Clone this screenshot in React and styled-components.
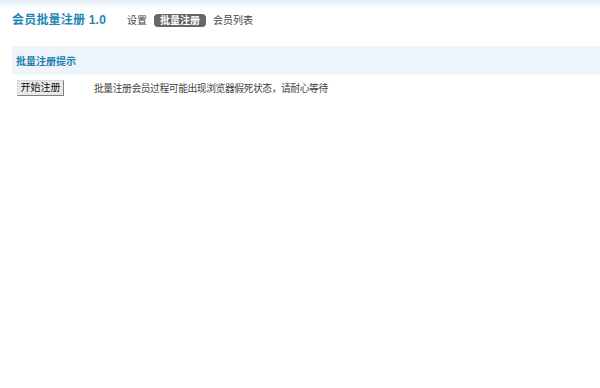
import React from "react";
import styled, { createGlobalStyle } from "styled-components";

const GlobalStyle = createGlobalStyle`
  html, body {
    margin: 0;
    padding: 0;
    background: #fff;
  }
  body {
    font-family: "Liberation Sans", "Noto Sans CJK SC", sans-serif;
    color: #333;
  }
`;

const Page = styled.div`
  width: 600px;
  min-height: 388px;
  background: linear-gradient(to bottom, #e6eff8 0px, #ffffff 9px);
`;

const Header = styled.div`
  display: flex;
  align-items: center;
  height: 40px;
  padding: 0 0 0 12px;
  margin-bottom: 6px;
`;

const Title = styled.h1`
  margin: 0 21px 0 0;
  font-size: 12px;
  font-weight: bold;
  color: #1b87b3;
  letter-spacing: 0.2px;
  line-height: 14px;
`;

const Nav = styled.div`
  display: flex;
  align-items: center;
  gap: 7px;
`;

const NavItem = styled.span`
  font-size: 10px;
  line-height: 13px;
  height: 13px;
  padding: 0 ${(p) => (p.$active ? "6px" : "0")};
  border-radius: 4px;
  font-weight: ${(p) => (p.$active ? "bold" : "normal")};
  background: ${(p) => (p.$active ? "#666" : "transparent")};
  color: ${(p) => (p.$active ? "#fff" : "#444")};
`;

const Content = styled.div`
  padding-left: 12px;
`;

const TipBar = styled.div`
  height: 28px;
  display: flex;
  align-items: center;
  padding-left: 4px;
  background: #edf4fb;
  border-bottom: 1px dotted #f4f7fb;
  font-size: 10px;
  font-weight: bold;
  color: #1a7fae;
`;

const ActionRow = styled.div`
  display: flex;
  align-items: center;
  padding: 5px 0 0 5px;
`;

const Button = styled.button`
  width: 47px;
  height: 16px;
  padding: 0;
  margin: 0 30px 0 0;
  font-family: inherit;
  font-size: 10px;
  line-height: 14px;
  color: #111;
  background: #e8e8e8;
  border: 1px solid;
  border-color: #d8d8d8 #808080 #808080 #d8d8d8;
  cursor: pointer;
`;

const Note = styled.span`
  font-size: 9.75px;
  letter-spacing: -0.4px;
  color: #444;
`;

export default function App() {
  return (
    <Page>
      <GlobalStyle />
      <Header>
        <Title>会员批量注册 1.0</Title>
        <Nav>
          <NavItem>设置</NavItem>
          <NavItem $active>批量注册</NavItem>
          <NavItem>会员列表</NavItem>
        </Nav>
      </Header>
      <Content>
        <TipBar>批量注册提示</TipBar>
        <ActionRow>
          <Button>开始注册</Button>
          <Note>批量注册会员过程可能出现浏览器假死状态，请耐心等待</Note>
        </ActionRow>
      </Content>
    </Page>
  );
}
